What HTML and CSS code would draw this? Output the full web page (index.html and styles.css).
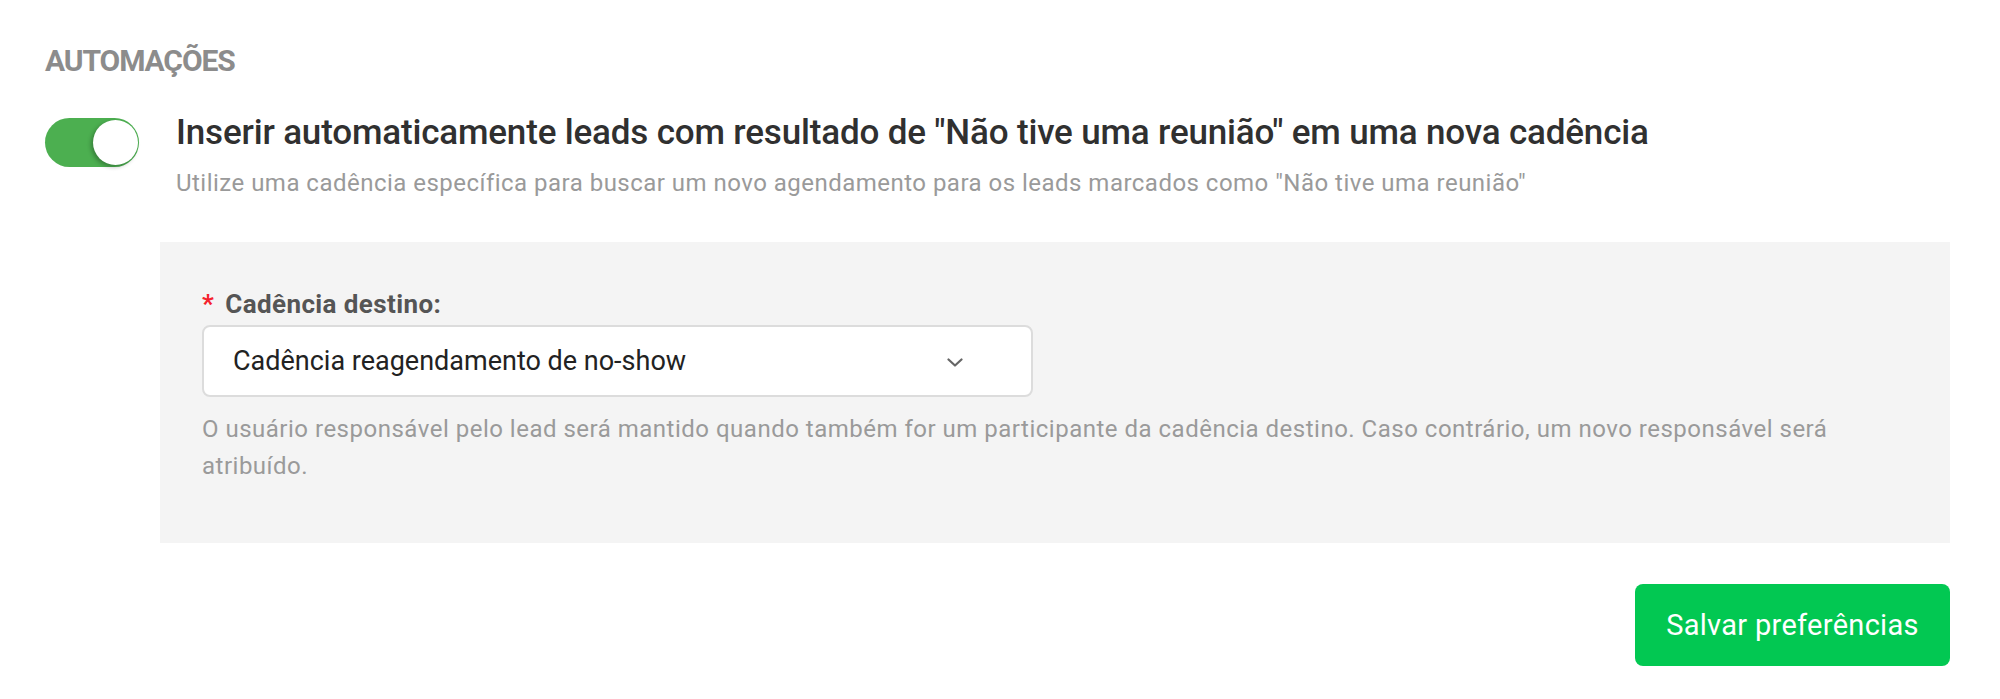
FILE: index.html
```html
<!DOCTYPE html>
<html lang="pt-BR">
<head>
<meta charset="utf-8">
<title>Automações</title>
<link rel="stylesheet" href="styles.css">
</head>
<body>
<main class="page">
  <h2 class="section-title">AUTOMAÇÕES</h2>
  <div class="option">
    <div class="toggle on" role="switch" aria-checked="true"><span class="knob"></span></div>
    <div class="option-text">
      <div class="option-title">Inserir automaticamente leads com resultado de "Não tive uma reunião" em uma nova cadência</div>
      <div class="option-desc">Utilize uma cadência específica para buscar um novo agendamento para os leads marcados como "Não tive uma reunião"</div>
    </div>
  </div>
  <section class="panel">
    <label class="field-label"><span class="required">*</span>Cadência destino:</label>
    <div class="select">
      <span class="select-value">Cadência reagendamento de no-show</span>
      <svg class="chevron" width="16" height="9" viewBox="0 0 16 9"><polyline points="1.5,1.5 8,7.5 14.5,1.5" fill="none" stroke="#666" stroke-width="2.2" stroke-linecap="round" stroke-linejoin="round"/></svg>
    </div>
    <p class="help">O usuário responsável pelo lead será mantido quando também for um participante da cadência destino. Caso contrário, um novo responsável será atribuído.</p>
  </section>
  <div class="actions">
    <button class="btn-save">Salvar preferências</button>
  </div>
</main>
</body>
</html>
```

FILE: styles.css
```css
html, body {
  margin: 0;
  padding: 0;
  background: #ffffff;
}
body {
  font-family: Roboto, "Open Sans", "Liberation Sans", sans-serif;
  color: #333;
}
.page {
  padding: 45px 50px 0 45px;
}
.section-title {
  margin: 0;
  font-size: 30px;
  line-height: 32px;
  font-weight: 700;
  color: #8c8c8c;
  letter-spacing: -1.1px;
}
.option {
  display: flex;
  align-items: flex-start;
  margin-top: 34px;
}
.toggle {
  position: relative;
  flex: none;
  width: 94px;
  height: 49px;
  margin-top: 7px;
  border-radius: 25px;
  background: #4caf50;
}
.knob {
  position: absolute;
  top: 2px;
  right: 1px;
  width: 45px;
  height: 45px;
  border-radius: 50%;
  background: #fff;
  box-shadow: -2px 2px 4px rgba(0, 0, 0, 0.28);
}
.option-text {
  margin-left: 37px;
}
.option-title {
  font-size: 35px;
  line-height: 44px;
  font-weight: 500;
  color: #303030;
  letter-spacing: -0.17px;
}
.option-desc {
  margin-top: 12px;
  font-size: 24px;
  line-height: 32px;
  color: #9a9a9a;
  letter-spacing: 0.48px;
}
.panel {
  margin: 43px 0 0 115px;
  padding: 46px 42px 58px 42px;
  background: #f4f4f4;
}
.field-label {
  display: block;
  font-size: 26px;
  line-height: 32px;
  font-weight: 700;
  color: #555;
  letter-spacing: 0.4px;
}
.required {
  color: #f5222d;
  margin-right: 11px;
}
.select {
  box-sizing: border-box;
  display: flex;
  align-items: center;
  justify-content: space-between;
  width: 831px;
  height: 72px;
  margin-top: 5px;
  padding: 0 68px 0 29px;
  background: #fff;
  border: 2px solid #dcdcdc;
  border-radius: 8px;
}
.select-value {
  font-size: 27px;
  color: #222;
}
.chevron {
  display: block;
  margin-top: 3px;
}
.help {
  margin: 14px 0 0 0;
  font-size: 24px;
  line-height: 37px;
  color: #9a9a9a;
  letter-spacing: 0.5px;
}
.actions {
  display: flex;
  justify-content: flex-end;
  margin-top: 41px;
}
.btn-save {
  width: 315px;
  height: 82px;
  border: none;
  border-radius: 8px;
  background: #02c852;
  color: #fff;
  font-family: inherit;
  font-size: 29px;
  letter-spacing: 0.3px;
  cursor: pointer;
}
```
